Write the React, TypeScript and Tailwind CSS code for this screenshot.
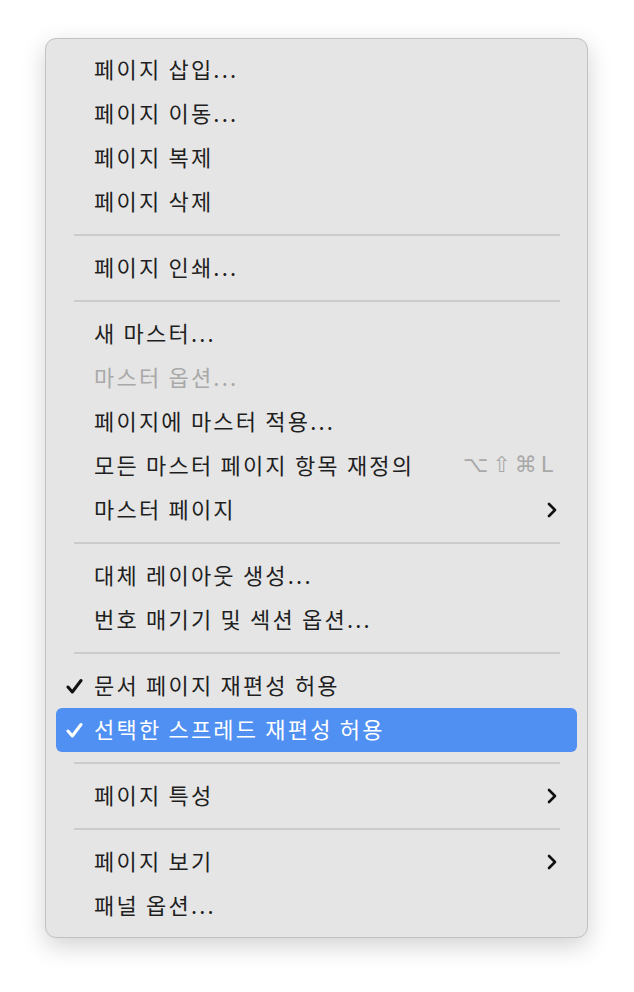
import React from 'react';

type Item =
  | { type: 'sep' }
  | { type: 'item'; label: string; checked?: boolean; disabled?: boolean; active?: boolean; shortcut?: string; submenu?: boolean };

const ITEMS: Item[] = [
  { type: 'item', label: '페이지 삽입...' },
  { type: 'item', label: '페이지 이동...' },
  { type: 'item', label: '페이지 복제' },
  { type: 'item', label: '페이지 삭제' },
  { type: 'sep' },
  { type: 'item', label: '페이지 인쇄...' },
  { type: 'sep' },
  { type: 'item', label: '새 마스터...' },
  { type: 'item', label: '마스터 옵션...', disabled: true },
  { type: 'item', label: '페이지에 마스터 적용...' },
  { type: 'item', label: '모든 마스터 페이지 항목 재정의', shortcut: '⌥⇧⌘L' },
  { type: 'item', label: '마스터 페이지', submenu: true },
  { type: 'sep' },
  { type: 'item', label: '대체 레이아웃 생성...' },
  { type: 'item', label: '번호 매기기 및 섹션 옵션...' },
  { type: 'sep' },
  { type: 'item', label: '문서 페이지 재편성 허용', checked: true },
  { type: 'item', label: '선택한 스프레드 재편성 허용', checked: true, active: true },
  { type: 'sep' },
  { type: 'item', label: '페이지 특성', submenu: true },
  { type: 'sep' },
  { type: 'item', label: '페이지 보기', submenu: true },
  { type: 'item', label: '패널 옵션...' },
];

function Check({ white }: { white?: boolean }) {
  return (
    <svg width="17" height="17" viewBox="0 0 17 17" fill="none">
      <path d="M2 9 L6.3 14 L15 2.5" stroke={white ? '#ffffff' : '#111111'} strokeWidth="3" strokeLinecap="round" strokeLinejoin="round" />
    </svg>
  );
}

function Chevron() {
  return (
    <svg width="10" height="16" viewBox="0 0 10 16" fill="none">
      <path d="M2 2 L8 8 L2 14" stroke="#111111" strokeWidth="2.6" strokeLinecap="round" strokeLinejoin="round" />
    </svg>
  );
}

export default function App() {
  return (
    <div className="w-[634px] h-[992px] bg-white pt-[38px] pl-[45px]" style={{ fontFamily: '"Noto Sans CJK KR", "Noto Sans", sans-serif' }}>
      <div className="w-[543px] h-[900px] rounded-[11px] bg-[#e5e5e5] border border-[#c2c2c2] shadow-[0_8px_24px_rgba(0,0,0,0.18)] py-[9px] px-[10px]">
        {ITEMS.map((it, i) =>
          it.type === 'sep' ? (
            <div key={i} className="h-[22px] flex items-center ml-[18px] mr-[17px]">
              <div className="h-[2px] w-full bg-[#cbcbcb]" />
            </div>
          ) : (
            <div
              key={i}
              className={`h-[44px] flex items-center rounded-[6px] text-[22px] ${it.active ? 'bg-[#5090f2] text-white' : it.disabled ? 'text-[#a9a9a9]' : 'text-[#1f1f1f]'}`}
            >
              <div className="w-[38px] pl-[10px] flex items-center">{it.checked && <Check white={it.active} />}</div>
              <span className="flex-1 leading-none tracking-[2.2px] pb-[4px]">{it.label}</span>
              {it.shortcut && (
                <span className="pr-[20px] pb-[3px] text-[#a9a9a9] text-[22px] tracking-[4px]" style={{ fontFamily: '"DejaVu Sans", sans-serif' }}>
                  {it.shortcut}
                </span>
              )}
              {it.submenu && (
                <span className="pr-[20px] flex items-center">
                  <Chevron />
                </span>
              )}
            </div>
          )
        )}
      </div>
    </div>
  );
}
